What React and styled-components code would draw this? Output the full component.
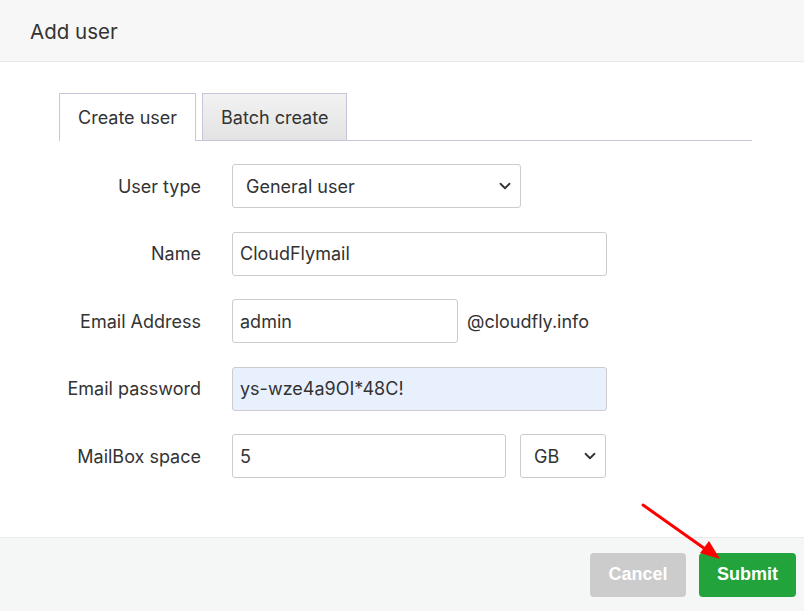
import styled, { createGlobalStyle } from "styled-components";
import { ChevronDown } from "lucide-react";

const GlobalStyle = createGlobalStyle`
  body {
    margin: 0;
    font-family: Inter, "Noto Sans", sans-serif;
    color: #333;
  }
`;

const Modal = styled.div`
  position: relative;
  width: 804px;
  height: 611px;
  display: flex;
  flex-direction: column;
  background: #fff;
  overflow: hidden;
`;

const Header = styled.div`
  height: 62px;
  box-sizing: border-box;
  display: flex;
  align-items: center;
  padding: 2px 0 0 30px;
  background: #f7f7f7;
  border-bottom: 1px solid #e9e9e9;
  font-size: 20.5px;
  color: #333;
`;

const Body = styled.div`
  flex: 1;
  padding: 31px 52px 0 59px;
`;

const TabBar = styled.div`
  display: flex;
  gap: 6px;
  border-bottom: 1px solid #c9c5d9;
`;

const Tab = styled.div`
  box-sizing: border-box;
  display: flex;
  align-items: center;
  padding: 0 18px;
  font-size: 18px;
  color: #333;
  border: 1px solid #c9c5d9;
  border-bottom: none;
  margin-bottom: ${({ $active }) => ($active ? "-1px" : "0")};
  height: ${({ $active }) => ($active ? "48px" : "47px")};
  background: ${({ $active }) =>
    $active ? "#fff" : "linear-gradient(#f2f2f2, #e3e3e3)"};
`;

const Form = styled.div`
  display: flex;
  flex-direction: column;
  gap: 23.5px;
  margin-top: 23px;
`;

const Row = styled.div`
  display: grid;
  grid-template-columns: 142px auto;
  column-gap: 31px;
  align-items: center;
`;

const Label = styled.div`
  text-align: right;
  font-size: 18px;
  color: #333;
`;

const Fields = styled.div`
  display: flex;
  align-items: center;
  gap: ${({ $gap }) => $gap || 0}px;
`;

const Input = styled.input`
  width: ${({ $w }) => $w}px;
  height: 44px;
  box-sizing: border-box;
  border: 1px solid #cccccc;
  border-radius: 3px;
  padding: 0 7px;
  font-family: Inter, "Noto Sans", sans-serif;
  font-size: 18px;
  color: #333;
  background: ${({ $filled }) => ($filled ? "#e8f0fe" : "#fff")};
  outline: none;
`;

const SelectWrap = styled.div`
  position: relative;
  width: ${({ $w }) => $w}px;
`;

const Select = styled.select`
  appearance: none;
  width: 100%;
  height: 44px;
  box-sizing: border-box;
  border: 1px solid #cccccc;
  border-radius: 3px;
  padding: 0 ${({ $pad }) => $pad || 13}px;
  font-family: Inter, "Noto Sans", sans-serif;
  font-size: 18px;
  color: #333;
  background: #fff;
  outline: none;
`;

const Chevron = styled(ChevronDown)`
  position: absolute;
  right: 7px;
  top: 13px;
  pointer-events: none;
  color: #333;
`;

const Domain = styled.span`
  font-size: 18px;
  color: #333;
`;

const Footer = styled.div`
  height: 74px;
  box-sizing: border-box;
  display: flex;
  justify-content: flex-end;
  align-items: center;
  gap: 13px;
  padding: 0 8px 0 0;
  background: #f5f6f6;
  border-top: 1px solid #e8eaea;
`;

const Button = styled.button`
  height: 44px;
  width: ${({ $w }) => $w}px;
  border: none;
  border-radius: 4px;
  font-family: "Liberation Sans", Arial, sans-serif;
  font-weight: bold;
  font-size: 18px;
  color: #fff;
  background: ${({ $primary }) => ($primary ? "#22a33b" : "#cccccc")};
`;

const Arrow = styled.svg`
  position: absolute;
  left: 0;
  top: 0;
  pointer-events: none;
`;

export default function App() {
  return (
    <Modal>
      <GlobalStyle />
      <Header>Add user</Header>
      <Body>
        <TabBar>
          <Tab $active>Create user</Tab>
          <Tab>Batch create</Tab>
        </TabBar>
        <Form>
          <Row>
            <Label>User type</Label>
            <Fields>
              <SelectWrap $w={289}>
                <Select defaultValue="general">
                  <option value="general">General user</option>
                  <option value="admin">Administrator</option>
                </Select>
                <Chevron size={18} strokeWidth={2.4} />
              </SelectWrap>
            </Fields>
          </Row>
          <Row>
            <Label>Name</Label>
            <Fields>
              <Input $w={375} defaultValue="CloudFlymail" />
            </Fields>
          </Row>
          <Row>
            <Label>Email Address</Label>
            <Fields $gap={9}>
              <Input $w={226} defaultValue="admin" />
              <Domain>@cloudfly.info</Domain>
            </Fields>
          </Row>
          <Row>
            <Label>Email password</Label>
            <Fields>
              <Input $w={375} $filled defaultValue="ys-wze4a9OI*48C!" />
            </Fields>
          </Row>
          <Row>
            <Label>MailBox space</Label>
            <Fields $gap={14}>
              <Input $w={274} defaultValue="5" />
              <SelectWrap $w={86}>
                <Select defaultValue="GB" $pad={13}>
                  <option value="GB">GB</option>
                  <option value="MB">MB</option>
                </Select>
                <Chevron size={18} strokeWidth={2.4} />
              </SelectWrap>
            </Fields>
          </Row>
        </Form>
      </Body>
      <Footer>
        <Button $w={96}>Cancel</Button>
        <Button $w={97} $primary>
          Submit
        </Button>
      </Footer>
      <Arrow width="804" height="611" viewBox="0 0 804 611">
        <line x1="643" y1="505" x2="708" y2="551" stroke="#f00" strokeWidth="3" strokeLinecap="round" />
        <polygon points="720,559 700,553 709,541" fill="#f00" />
      </Arrow>
    </Modal>
  );
}
